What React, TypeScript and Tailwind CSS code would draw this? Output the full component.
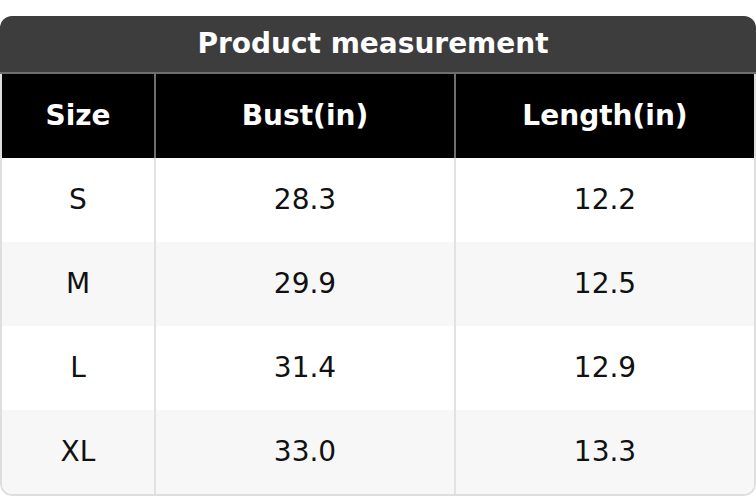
const ROWS = [
  { size: "S", bust: "28.3", length: "12.2" },
  { size: "M", bust: "29.9", length: "12.5" },
  { size: "L", bust: "31.4", length: "12.9" },
  { size: "XL", bust: "33.0", length: "13.3" },
];

export default function App() {
  return (
    <div
      className="w-[756px] h-[496px] bg-white pt-4"
      style={{ fontFamily: '"DejaVu Sans", Verdana, sans-serif' }}
    >
      <div className="rounded-[12px] overflow-hidden">
        {/* Title */}
        <div className="h-[58px] bg-[#3d3d3d] flex items-center justify-center pr-[10px] border-b-2 border-[#6e6e6e]">
          <span className="text-white font-bold text-[28px]">Product measurement</span>
        </div>

        <div className="border-x-2 border-b-2 border-[#dedede] rounded-b-[12px] overflow-hidden">
          {/* Header */}
          <div className="grid grid-cols-[154px_300px_1fr] h-[84px] bg-black text-white font-bold text-[28px]">
            <div className="flex items-center justify-center border-r-2 border-[#6e6e6e]">Size</div>
            <div className="flex items-center justify-center border-r-2 border-[#6e6e6e]">Bust(in)</div>
            <div className="flex items-center justify-center">Length(in)</div>
          </div>

          {/* Body */}
          {ROWS.map((row, i) => (
            <div
              key={row.size}
              className={`grid grid-cols-[154px_300px_1fr] h-[84px] text-[#111] text-[28px] ${
                i % 2 === 1 ? "bg-[#f7f7f7]" : "bg-white"
              }`}
            >
              <div className="flex items-center justify-center border-r-2 border-[#e2e2e2]">{row.size}</div>
              <div className="flex items-center justify-center border-r-2 border-[#e2e2e2]">{row.bust}</div>
              <div className="flex items-center justify-center">{row.length}</div>
            </div>
          ))}
        </div>
      </div>
    </div>
  );
}
